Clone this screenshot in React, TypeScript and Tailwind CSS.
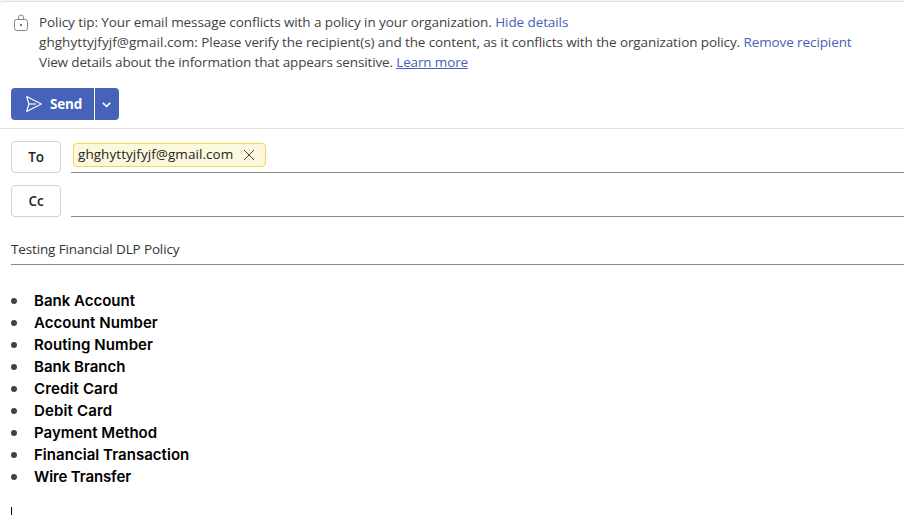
import React from "react";

const items = [
  { label: "Bank Account", tracking: "tracking-[0px]" },
  { label: "Account Number", tracking: "tracking-[0.06px]" },
  { label: "Routing Number", tracking: "tracking-[0.1px]" },
  { label: "Bank Branch", tracking: "tracking-[0px]" },
  { label: "Credit Card", tracking: "tracking-[0.14px]" },
  { label: "Debit Card", tracking: "tracking-[0.15px]" },
  { label: "Payment Method", tracking: "tracking-[0px]" },
  { label: "Financial Transaction", tracking: "tracking-[0.04px]" },
  { label: "Wire Transfer", tracking: "tracking-[-0.13px]" },
];

const LockIcon = () => (
  <svg width="16" height="18" viewBox="0 0 16 18" fill="none" stroke="#858585">
    <rect x="1.5" y="5.5" width="13" height="11" rx="2" />
    <path d="M5.5 5.5V3.5a2.5 2.5 0 0 1 5 0v2" />
    <rect x="7" y="10" width="2" height="2" fill="#757575" stroke="none" />
  </svg>
);

const SendIcon = () => (
  <svg width="18" height="18" viewBox="0 0 18 18" fill="none" stroke="#fff" strokeWidth="1.2" strokeLinejoin="round">
    <path d="M1.7 1.5 16.3 9 1.7 16.5 3.9 9Z" />
    <path d="M3.9 9H11" />
  </svg>
);

const PolicyTip = () => (
  <div className="flex h-[82px] pl-[13px] pt-[8px] text-[13.5px] leading-[20px] text-[#424242]">
    <div className="mt-[2px] w-[26px] shrink-0">
      <LockIcon />
    </div>
    <div className="whitespace-nowrap">
      <p className="tracking-[-0.088px]">
        Policy tip: Your email message conflicts with a policy in your organization.{" "}
        <a className="text-[#4661b8]">Hide details</a>
      </p>
      <p className="tracking-[-0.1px]">
        <span className="tracking-[0.06px]">ghghyttyjfyjf@gmail.com:</span> Please verify the recipient(s) and the
        content, as it conflicts with the organization policy.{" "}
        <a className="text-[#4661b8]">Remove recipient</a>
      </p>
      <p className="tracking-[-0.145px]">
        View details about the information that appears sensitive.{" "}
        <a className="text-[#4661b8] underline underline-offset-1">Learn more</a>
      </p>
    </div>
  </div>
);

const fieldButton =
  "h-[32px] w-[50px] shrink-0 rounded-[4px] border border-[#d1d1d1] text-[13.5px] font-semibold tracking-[-0.2px] text-[#242424]";

const App = () => {
  return (
    <div className="h-[515px] w-[904px] overflow-hidden bg-[#f5f5f5] pt-px font-['Open_Sans','Noto_Sans',sans-serif]">
      <div className="h-[514px] rounded-tl-[4px] border-t border-[#e2e2e2] bg-white pt-[2px]">
        <PolicyTip />

        <div className="flex h-[43px] border-b border-[#e0e0e0] pl-[11px] pt-[2px]">
          <button className="flex h-[32px] w-[83px] items-center rounded-l-[4px] bg-[#4663b9] pl-[14px] text-[13.5px] font-bold text-white">
            <SendIcon />
            <span className="ml-[7px] tracking-[-0.2px]">Send</span>
          </button>
          <button
            aria-label="send-options"
            className="ml-px flex h-[32px] w-[24px] items-center rounded-r-[4px] bg-[#4663b9] pl-[7px] pt-[2px]"
          >
            <svg width="9" height="6" viewBox="0 0 9 6" fill="none" stroke="#fff" strokeWidth="1.6">
              <path d="M.8.9 4.5 4.4 8.2.9" />
            </svg>
          </button>
        </div>

        <div className="flex h-[44px] gap-[10px] pl-[11px] pt-[12px]">
          <button className={fieldButton}>To</button>
          <div className="h-[32px] flex-1 border-b border-[#8a8a8a] pl-[2px] pt-[2px]">
            <div className="flex h-[24px] w-[193px] items-center rounded-[4px] border border-[#f2d94c] bg-[#fbf8dd] pl-[4px] text-[13.5px] text-[#242424]">
              <span className="w-[165px] whitespace-nowrap pb-px tracking-[0.06px]">ghghyttyjfyjf@gmail.com</span>
              <svg width="12" height="12" viewBox="0 0 12 12" fill="none" stroke="#424242">
                <path d="m1 1 10 10M11 1 1 11" />
              </svg>
            </div>
          </div>
        </div>

        <div className="flex h-[44px] gap-[10px] pl-[11px] pt-[12px]">
          <button className={fieldButton}>Cc</button>
          <div className="h-[32px] flex-1 border-b border-[#8a8a8a]" />
        </div>

        <div className="ml-[11px] mt-[16px] h-[32px] border-b border-[#8a8a8a] text-[13.5px] leading-[32px] tracking-[-0.14px] text-[#333333]">
          <span>Testing Financial DLP Policy</span>
        </div>

        <ul className="ml-[11px] mt-[25px] font-['Inter','Liberation_Sans',sans-serif] text-[15px] font-semibold leading-[22px] text-black">
          {items.map((item) => (
            <li key={item.label} className="flex items-center">
              <span className="mr-[17px] size-[6px] rounded-full bg-[#424242]" />
              <span className={item.tracking}>{item.label}</span>
            </li>
          ))}
        </ul>
        <div className="ml-[11px] mt-[19px] h-[20px] w-px bg-black" />
      </div>
    </div>
  );
};

export default App;
